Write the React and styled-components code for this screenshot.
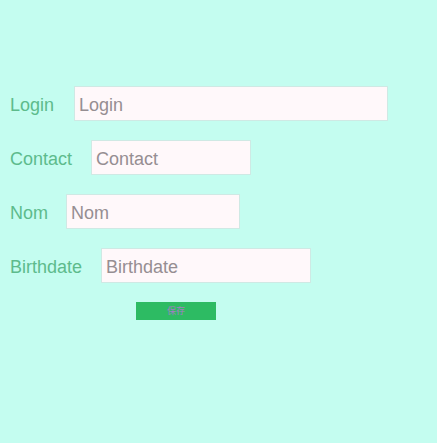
import styled, { createGlobalStyle } from "styled-components"

const Global = createGlobalStyle`
    html, body {
        margin: 0;
        padding: 0;
        background: #c4fdf0;
        font-family: "Liberation Sans", Arial, sans-serif;
    }
`
const Page = styled.div`
    width: 437px;
    height: 443px;
    background: #c4fdf0;
    padding: 86px 0 0 10px;
    box-sizing: border-box;
`
const Form = styled.form`
    display: flex;
    flex-direction: column;
    gap: 19px;
`
const Row = styled.div`
    display: flex;
    align-items: center;
    gap: ${(p) => p.$gap}px;
`
const Label = styled.label`
    font-size: 18px;
    color: #5dbb8c;
    padding-top: 3px;
`
const Input = styled.input`
    width: ${(p) => p.$w}px;
    height: 35px;
    box-sizing: border-box;
    border: 1px solid #cfe9e4;
    background: #fff8fa;
    padding: 3px 4px 0;
    font-family: inherit;
    font-size: 18px;
    color: #555;
    outline: none;
    &::placeholder {
        color: #968e92;
    }
`
const Submit = styled.button`
    margin-left: 126px;
    width: 80px;
    height: 18px;
    border: none;
    background: #2dbb63;
    color: #a37bc4;
    font-size: 9px;
    font-family: "Noto Sans CJK SC", sans-serif;
    padding: 0;
    line-height: 18px;
`

const fields = [
    { name: "Login", w: 314, gap: 20 },
    { name: "Contact", w: 160, gap: 19 },
    { name: "Nom", w: 174, gap: 18 },
    { name: "Birthdate", w: 210, gap: 19 },
]

const App = () => {
    return (
        <Page>
            <Global />
            <Form onSubmit={(e) => e.preventDefault()}>
                {fields.map((f) => (
                    <Row key={f.name} $gap={f.gap}>
                        <Label>{f.name}</Label>
                        <Input $w={f.w} placeholder={f.name} />
                    </Row>
                ))}
                <Row $gap={0}>
                    <Submit type="submit">保存</Submit>
                </Row>
            </Form>
        </Page>
    )
}

export default App
